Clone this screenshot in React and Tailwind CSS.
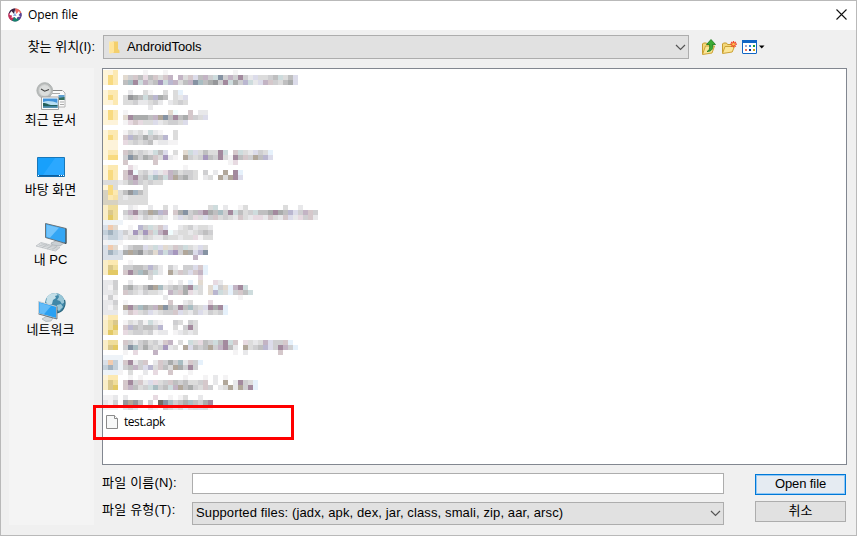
import { useState } from "react";

// Colours of the masked file list, one letter per 5px cell
const CELL_COLORS = {
  a: "#f4f3f4", b: "#e8e8ea", c: "#dcdcdc", d: "#cfcfd1", e: "#bfbfc0", f: "#aaacac", g: "#96979a", h: "#716c65",
  p: "#e7dae1", P: "#a38a9e", m: "#c3b4c4", k: "#d5c8cb", v: "#dcdcea", V: "#a697bd", w: "#bab7d0",
  s: "#e6f1fb", S: "#8693a3", t: "#cedcdd", T: "#a9bdc2", o: "#e2dad0", O: "#b1a79a", x: "#f0fcfd",
  1: "#fff5d8", 2: "#f8da80", 3: "#fce9b2", 4: "#fdf3da", 5: "#faeec8", 6: "#dac88c", 7: "#efdd9b", 8: "#e3c965",
  i: "#eef3f8", j: "#dae0e8", n: "#f1cbae", N: "#a2b2bf", l: "#c4d0da", y: "#d7d2c1", z: "#f8e2a5",
};

// First four letters are the icon, the rest is the name
const MASKED_ROWS = [
  "143.....a...a.............a",
  "123.odkepekckm.mckvemdtSdmdPdbvccdetcev",
  "123.eTPtmdeVtwmcemSTefgdPtfdwtbvmkdcefv",
  "....",
  "133..b..ca..c.cs",
  "123.cgfetewfe.cbv",
  "143.ccdbbcdb.bcdc",
  ".........b",
  "123.a........ox..k.bb",
  "123.oPfffemOSePefkdcv",
  "144.apkpccvbcddcv",
  "....",
  "133.acbcatba..c",
  "123.kwedfdedw.c",
  "144.pcdcdeabbaa",
  "144.",
  "133.kecdcbtev.c.otvceccPt.ktcbvdcs",
  "122.dSfdfekcVba.OdcdVedPcaPekdOewv",
  "....k.....k..............ap",
  "133..pa.........a",
  "123.kPxcdbvbpmecddc.d.b.O.Ps",
  "123.kmPdetTetmOefdc.bc.OcOPv",
  "cccbcemdcdcc",
  "12c.....c",
  "y23cegNec",
  "y3zcbcccc",
  "yyycccccc",
  "577..ba..b..c.b......ct.b..ac.......c..b",
  "567.dmPdeOfwm.kfSdemPfeTdPtecdteefPfewvdmkd",
  "587.bcpbdcbcb.bvcdpcvdkcdcbkcbppbkcbkvbpdkb",
  "iiii",
  "jno..a.wdtckv..bcdbccb",
  "lNljdbVdVktmPxbccbcded",
  "jlljbccbdcbbdccbccpacc",
  "aiia",
  "jno.bdeevctvockdtcbvc",
  "jNljfOfgdeowtwVdOfvwS",
  "jjjj..............m",
  "533..a",
  "567.ddeedwdb.db.ddvks",
  "588.kPeTfdtb.Ockdvkms",
  ".........c.........p",
  "bbd..b.......a.b.s.o..pb",
  "bad.efdcegOTcdedfPtc.osdosmPt",
  "bbc.kdcbdccb.mdkfpbc.owtcsdket",
  "ada.........b..............a",
  "bbd.a........k..bc...p",
  "bac.OPeTfemOSedPeTdcvPfPs",
  "bbb.bkpcdvbcddkvcbdvbdcds",
  "433..............",
  "576.acbdatba..dc.dc",
  "578.kwedeedw..c.dPc",
  "587.pcddcdabb.abcbc",
  "....",
  "577.kdbdecdbkm.c.tcpedtePtk.pcbcmvddks",
  "568.dSTdfdcdVbc.OvedeOdmPeb.OcdewvdPmds",
  "....a.p...m...............a.b......k",
  "iiii.",
  "jnlikPbdk.bkdfdTbkds",
  "lNlidemdvwckecOfdPd",
  "iiia.c..b.p..k...a",
  "433..a.a........a...a.b.a",
  "567.kPdkbvpcdkedeccdk.b.O.bPdcs",
  "568.kmecdtTdetmOefdckd.bcObOdPs",
  "....",
  "aab.b.....p..a.ac..b",
  "bad.gOge.d.hSTdefTedfP",
  "aaa.bcb..ba.kcbcspcvca",
];

const PLACES = [
  { id: "recent", label: "최근 문서", Icon: RecentIcon },
  { id: "desktop", label: "바탕 화면", Icon: DesktopIcon },
  { id: "pc", label: "내 PC", Icon: ComputerIcon },
  { id: "network", label: "네트워크", Icon: NetworkIcon },
];

function AppLogo() {
  return (
    <svg width="14" height="14" viewBox="0 0 14 14">
      <circle cx="7" cy="7" r="6.5" fill="#4b3f72" />
      <path d="M1 5A6.5 6.5 0 0 1 7 .5v5z" fill="#3e2444" />
      <path d="M7 .5A6.5 6.5 0 0 1 13.3 5L8 7z" fill="#ef6860" />
      <path d="M13.3 5A6.5 6.5 0 0 1 11 12L7 7z" fill="#5a4596" />
      <path d="M11 12a6.5 6.5 0 0 1-7 .8L7 7z" fill="#17836e" />
      <path d="M4 12.8A6.5 6.5 0 0 1 .7 5L7 7z" fill="#c62f59" />
      <path d="M2 5l1.500-2L6 6l1-4 1.500 4L11 3l1 2.500-1.500 1.500 2 1.500-3 .5-1 2-2-2-3 1 .5-2.500-2.500-.5z" fill="#fff" />
      <path d="M5 8l2-3.500L8.500 8z" fill="#8fb5e8" />
    </svg>
  );
}

function FolderIcon() {
  return (
    <svg width="11" height="13" viewBox="0 0 11 13">
      <path d="M0 .5h5v11l-5 1z" fill="#fce8a8" />
      <path d="M4 .5h5v7.500l1.500 1.500V12H4z" fill="#f3cf6c" />
      <path d="M1 2l4-1.500v11L1 12.500z" fill="#ffe49a" />
    </svg>
  );
}

function FileIcon() {
  return (
    <svg width="12" height="14" viewBox="0 0 12 14">
      <path d="M.5.5h8l3 3v10H.5z" fill="#f7f8f8" stroke="#8b8b8b" />
      <path d="M8.500 .5v3h3" fill="#fff" stroke="#8b8b8b" />
    </svg>
  );
}

function UpFolderIcon() {
  return (
    <svg width="15" height="16" viewBox="0 0 15 16">
      <path d="M1.500 15V5l1-1h3l1 1h5v3" fill="#f3d77a" stroke="#c89c2e" />
      <path d="M1.500 15.500L4.500 7H13.500l-2.500 7z" fill="#fbe697" stroke="#cda336" />
      <path d="M6 12.500C8.500 11.500 9 9.500 8.500 5.500H5.500L10 .5l4.500 5h-2.800c.5 4-.7 7-5.700 7z" fill="#3cab35" stroke="#1b7a1c" strokeWidth=".8" />
    </svg>
  );
}

function NewFolderIcon() {
  return (
    <svg width="16" height="15" viewBox="0 0 16 15">
      <path d="M1.500 13V4l1-1h3l1 1.500h5V6" fill="#f3d77a" stroke="#c89c2e" />
      <path d="M1.500 13.500L4 6.500h9.500l-2.300 5.500z" fill="#fbe697" stroke="#cda336" />
      <path d="M12.500 1v6.500M9.200 4.200h6.800M10.200 2l4.600 4.600M14.800 2l-4.600 4.600" stroke="#ef4a28" strokeWidth="1.300" />
      <circle cx="12.500" cy="4.200" r="1.300" fill="#ffc14d" />
    </svg>
  );
}

function ViewIcon() {
  return (
    <svg width="23" height="14" viewBox="0 0 23 14">
      <rect x=".5" y=".5" width="14" height="13" rx=".5" fill="#fff" stroke="#1266c4" />
      <path d="M0 0h15v3H0z" fill="#1266c4" />
      <g shapeRendering="crispEdges">
        <path d="M3 5h2v2H3z" fill="#a9a5c8" />
        <path d="M7 5h2v2H7z" fill="#2b83e0" />
        <path d="M11 5h2v2h-2z" fill="#169b36" />
        <path d="M3 9h2v2H3z" fill="#f17558" />
        <path d="M7 9h2v2H7z" fill="#0d348d" />
        <path d="M11 9h2v2h-2z" fill="#d4a112" />
      </g>
      <path d="M17 5.500h5.500l-2.750 3z" fill="#000" />
    </svg>
  );
}

function RecentIcon() {
  return (
    <svg width="32" height="32" viewBox="0 0 32 32">
      <path d="M15 10.500h12.500l2.500 2.500v14H15z" fill="#fafafa" stroke="#b4b4b4" />
      <path d="M17 10.500h10" stroke="#888" />
      <path d="M17 13.500h8M25 22h4M25 24.500h4" stroke="#aaa" />
      <path d="M23.500 15h6v5h-6z" fill="#5d9fd0" />
      <path d="M23.500 18l6-1v3h-6z" fill="#356f5c" />
      <circle cx="9.700" cy="10.500" r="7.800" fill="#b7bab9" stroke="#b0b4b3" />
      <circle cx="9.700" cy="10.500" r="5.700" fill="#dcdedd" stroke="#cfd1d0" />
      <path d="M6 9l3.700 2.200L14 9.500" fill="none" stroke="#444" strokeWidth="1.200" />
      <path d="M6.500 17h17v12.500h-17z" fill="#fff" stroke="#a4a4a4" />
      <path d="M8 18.500h14.500v9.500H8z" fill="#4192d9" />
      <path d="M8 22c4-2 10-1 14.500 1v3H8z" fill="#b8def3" />
      <path d="M8 23c4 0 5 1.500 8 2h6.500v1.500H8z" fill="#23605b" />
      <path d="M8 26.500h14.500V28H8z" fill="#5b93ae" />
    </svg>
  );
}

function DesktopIcon() {
  return (
    <svg width="32" height="32" viewBox="0 0 32 32">
      <path d="M2.500 7.500h27v19h-27z" fill="#18a0fb" stroke="#1877b9" />
      <path d="M20 8h9v17H8z" fill="#2ba8ff" />
      <path d="M3 25h26v1.500H3z" fill="#0d5f9f" />
      <path d="M3 25h1v1H3zM24 25h1v1h-1zM26 25h1v1h-1zM28 25h1v1h-1z" fill="#fff" />
    </svg>
  );
}

function ComputerIcon() {
  return (
    <svg width="32" height="32" viewBox="0 0 32 32">
      <path d="M16 23l7-3 6 3-4 3-8-1z" fill="#c9cfd3" stroke="#98a0a6" strokeWidth=".6" />
      <path d="M10.500 3.500L31 8.500v15L10.500 17.500z" fill="#33a6f5" stroke="#69747b" />
      <path d="M11.500 4.800L24 7.700 15 17.700l-3.500-1z" fill="#71c3fb" />
      <path d="M31 8.500v15l-1.500-.5" fill="none" stroke="#3c4a53" />
      <path d="M1 26l5-3.500 19 5-4.500 3.500z" fill="#dfe2e4" stroke="#b3b8bb" strokeWidth=".7" />
      <path d="M4 25l18 4.500M6 23.800l17 4.500M7 28l5-4M12 29.200l5-4M17 30.300l5-4" stroke="#b0b5b8" strokeWidth=".6" />
    </svg>
  );
}

function NetworkIcon() {
  return (
    <svg width="32" height="32" viewBox="0 0 32 32">
      <circle cx="20" cy="13" r="10" fill="#3f87a8" />
      <path d="M12 7c2-3 5-4 9-4l2 2-3 1 1 2-3 2-1 4-4 1-2-3z" fill="#c4dfe8" />
      <path d="M23 4c4 1 6 4 7 8l-3 2-2-3-3-1 2-3zM22 15l4-1 2 3-4 4-3-2z" fill="#98c6d7" />
      <path d="M29.500 10a10 10 0 0 1-8 13" fill="none" stroke="#286780" strokeWidth="1.200" />
      <path d="M7 29l5-3 6 2-2 3-5 .5z" fill="#d2d7da" stroke="#9ba4aa" strokeWidth=".6" />
      <path d="M3.500 11.500L21.500 16.500v12L3.500 23.500z" fill="#29a0f2" stroke="#c9d0d4" />
      <path d="M4.500 12.800L16 16 9 24.200l-4.500-1.200z" fill="#62bbf8" />
      <path d="M22 16.500v12.500L3.500 24" fill="none" stroke="#55636c" strokeWidth=".8" />
    </svg>
  );
}

function MaskedFiles() {
  return (
    <svg className="mt-px block" width="225" height="340" shapeRendering="crispEdges">
      {MASKED_ROWS.map((row, y) =>
        row.split("").map((cell, x) =>
          CELL_COLORS[cell] ? (
            <rect key={`${x}-${y}`} x={x * 5} y={y * 5} width="5" height="5" fill={CELL_COLORS[cell]} />
          ) : null
        )
      )}
    </svg>
  );
}

function Chevron() {
  return (
    <svg width="11" height="7" viewBox="0 0 11 7">
      <path d="M1 1l4.500 4.500L10 1" fill="none" stroke="#555" strokeWidth="1.200" />
    </svg>
  );
}

const App = () => {
  const [fileName, setFileName] = useState("");

  return (
    <div className="flex h-[536px] w-[857px] flex-col border border-[#b9b9b9] bg-[#f0f0f0] font-['Liberation_Sans','Noto_Sans_CJK_KR',sans-serif] text-[13px] leading-[14px] text-black">
      {/* Title bar */}
      <div className="flex h-[29px] items-center bg-white pl-[7px] pr-[9px]">
        <div className="pb-[2px]">
          <AppLogo />
        </div>
        <span className="ml-[6px] pb-px font-['Open_Sans',sans-serif] text-[12px] tracking-[-0.1px]">Open file</span>
        <svg className="ml-auto mb-[2px]" width="11" height="11" viewBox="0 0 11 11">
          <path d="M.5.5l10 10M10.500.5l-10 10" stroke="#111" strokeWidth="1.100" />
        </svg>
      </div>

      {/* Location */}
      <div className="mt-[5px] flex h-6 items-center">
        <span className="w-[102px] pr-[8px] text-right">찾는 위치(I):</span>
        <div className="flex h-6 w-[586px] items-center border border-[#adadad] bg-[#e1e1e1] pl-[5px] pr-[2px]">
          <FolderIcon />
          <span className="ml-[7px] tracking-[-0.05px]">AndroidTools</span>
          <span className="ml-auto">
            <Chevron />
          </span>
        </div>
        <div className="ml-[12px] flex items-center gap-[5px]">
          <UpFolderIcon />
          <NewFolderIcon />
          <ViewIcon />
        </div>
      </div>

      <div className="mt-[9px] flex">
        {/* Places */}
        <div className="ml-2 h-[457px] w-[85px] bg-[#f4f4f4] pr-[2px]">
          {PLACES.map(({ id, label, Icon }) => (
            <div key={id} className="flex h-[70px] flex-col items-center gap-px pt-3">
              <Icon />
              <span className="whitespace-nowrap">{label}</span>
            </div>
          ))}
        </div>

        <div className="ml-2 w-[745px]">
          {/* File list */}
          <div className="h-[397px] border border-[#828790] bg-white">
            <MaskedFiles />
            <div className="relative ml-[-10px] mt-[-5px] flex h-[35px] w-[201px] items-center border-3 border-[#ff0000] pb-px pl-[10px]">
              <FileIcon />
              <span className="ml-[6px] font-['Open_Sans',sans-serif] text-[12px] tracking-[-0.45px]">test.apk</span>
            </div>
          </div>

          <div className="flex">
            <div className="w-[622px] pt-2">
              <div className="flex h-[21px] items-center">
                <label className="w-[90px] pb-[2px] tracking-[0.2px]" htmlFor="file-name">파일 이름(N):</label>
                <input
                  id="file-name"
                  className="h-[21px] w-[532px] border border-[#adadad] bg-white px-1 outline-none"
                  value={fileName}
                  onChange={(e) => setFileName(e.target.value)}
                />
              </div>
              <div className="mt-2 flex h-[23px] items-center">
                <span className="w-[90px] pb-[8px] tracking-[0.2px]">파일 유형(T):</span>
                <div className="flex h-[23px] w-[532px] items-center border border-[#adadad] bg-[#e1e1e1] pl-[3px] pr-[2px]">
                  <span className="pb-px tracking-[0.12px]">Supported files: (jadx, apk, dex, jar, class, smali, zip, aar, arsc)</span>
                  <span className="ml-auto">
                    <Chevron />
                  </span>
                </div>
              </div>
            </div>
            <div className="ml-[31px] flex w-[91px] flex-col gap-[6px] pt-[9px]">
              <button className="h-[21px] border border-[#0078d7] bg-[#e5ebf2] pb-[2px] leading-[16px] tracking-[-0.1px] shadow-[inset_0_0_0_1px_#90c8f6]">
                Open file
              </button>
              <button className="h-[21px] border border-[#adadad] bg-[#e1e1e1] pb-px leading-[16px]">취소</button>
            </div>
          </div>
        </div>
      </div>
    </div>
  );
};

export default App;
